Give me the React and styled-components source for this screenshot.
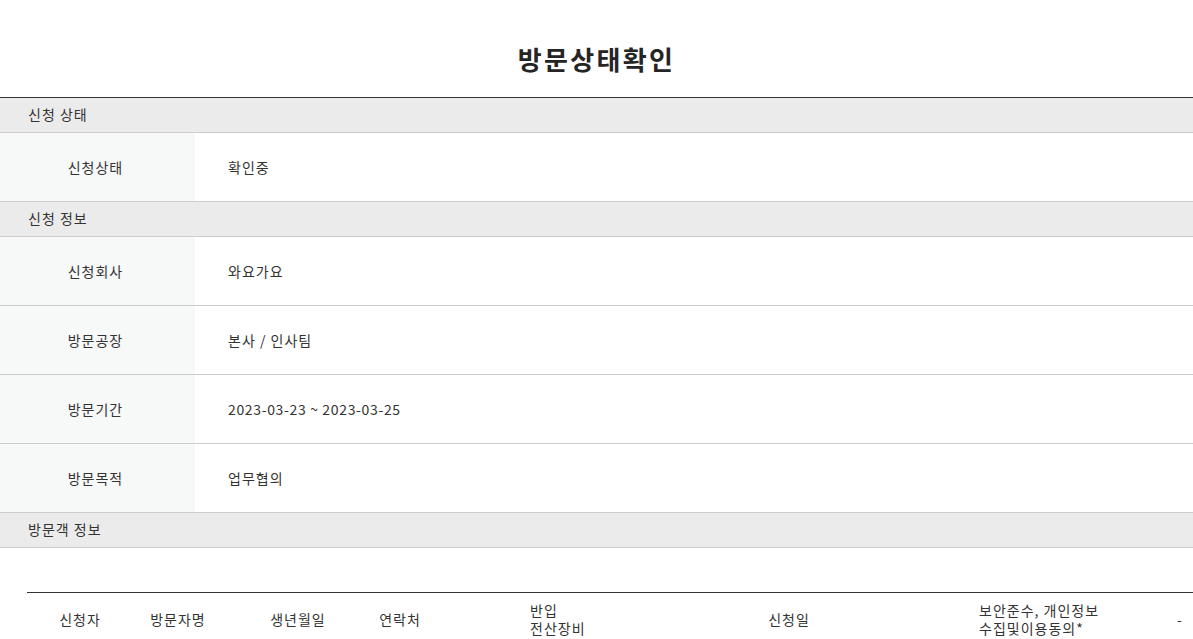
import React from "react";
import styled, { createGlobalStyle } from "styled-components";

const Global = createGlobalStyle`
  html, body { margin: 0; padding: 0; background: #fff; }
  body {
    font-family: "Noto Sans CJK KR", "Noto Sans", sans-serif;
    color: #333;
    overflow-x: hidden;
    letter-spacing: 1px;
  }
`;

const Page = styled.div`
  width: 1193px;
`;

const Title = styled.h1`
  margin: 0;
  padding: 44px 0 23px;
  font-size: 26px;
  line-height: 30px;
  font-weight: 700;
  color: #252525;
  text-align: center;
  letter-spacing: 2.3px;
`;

const Sheet = styled.div`
  border-top: 1px solid #333;
`;

const SectionHead = styled.div`
  height: 34px;
  box-sizing: border-box;
  display: flex;
  align-items: center;
  padding: 0 0 2px 28px;
  background: #ebebeb;
  border-bottom: 1px solid #cccccc;
  font-size: 14px;
  line-height: 20px;
  color: #333;
  height: 35px;
`;

const Row = styled.div`
  display: grid;
  grid-template-columns: 195px 1fr;
  height: 69px;
  box-sizing: border-box;
  border-bottom: 1px solid #cccccc;
`;

const Label = styled.div`
  display: flex;
  align-items: center;
  justify-content: center;
  background: #f7f8f8;
  font-size: 14px;
  color: #333;
  padding: 0 4px 1px 0;
`;

const Value = styled.div`
  display: flex;
  align-items: center;
  padding: 0 0 1px 33px;
  font-size: 14px;
  color: #333;
  letter-spacing: ${(p) => (p.$num ? "0.65px" : "1px")};
`;

const VisitorTable = styled.div`
  margin: 44px 0 0 27px;
  border-top: 1px solid #333;
  display: grid;
  grid-template-columns: 106px 90px 150px 54px 241px 242px 258px 60px;
  height: 52px;
`;

const Th = styled.div`
  display: flex;
  align-items: center;
  justify-content: ${(p) => (p.$left ? "flex-start" : "center")};
  padding-left: ${(p) => p.$pad || 0}px;
  font-size: 14px;
  line-height: 18px;
  color: #333;
  white-space: nowrap;
`;

const Stack = styled.div`
  display: flex;
  flex-direction: column;
  text-align: left;
`;

const sections = [
  { head: "신청 상태", rows: [["신청상태", "확인중"]] },
  {
    head: "신청 정보",
    rows: [
      ["신청회사", "와요가요"],
      ["방문공장", "본사 / 인사팀"],
      ["방문기간", "2023-03-23 ~ 2023-03-25", true],
      ["방문목적", "업무협의"],
    ],
  },
];

export default function App() {
  return (
    <Page>
      <Global />
      <Title>방문상태확인</Title>
      <Sheet>
        {sections.map((s) => (
          <React.Fragment key={s.head}>
            <SectionHead>{s.head}</SectionHead>
            {s.rows.map(([k, v, num]) => (
              <Row key={k}>
                <Label>{k}</Label>
                <Value $num={num}>{v}</Value>
              </Row>
            ))}
          </React.Fragment>
        ))}
        <SectionHead>방문객 정보</SectionHead>
      </Sheet>
      <VisitorTable>
        <Th>신청자</Th>
        <Th>방문자명</Th>
        <Th>생년월일</Th>
        <Th>연락처</Th>
        <Th $left $pad={103}>
          <Stack>
            <span>반입</span>
            <span>전산장비</span>
          </Stack>
        </Th>
        <Th>신청일</Th>
        <Th $left $pad={69}>
          <Stack>
            <span>보안준수, 개인정보</span>
            <span>수집및이용동의*</span>
          </Stack>
        </Th>
        <Th $left $pad={9}>-</Th>
      </VisitorTable>
    </Page>
  );
}
